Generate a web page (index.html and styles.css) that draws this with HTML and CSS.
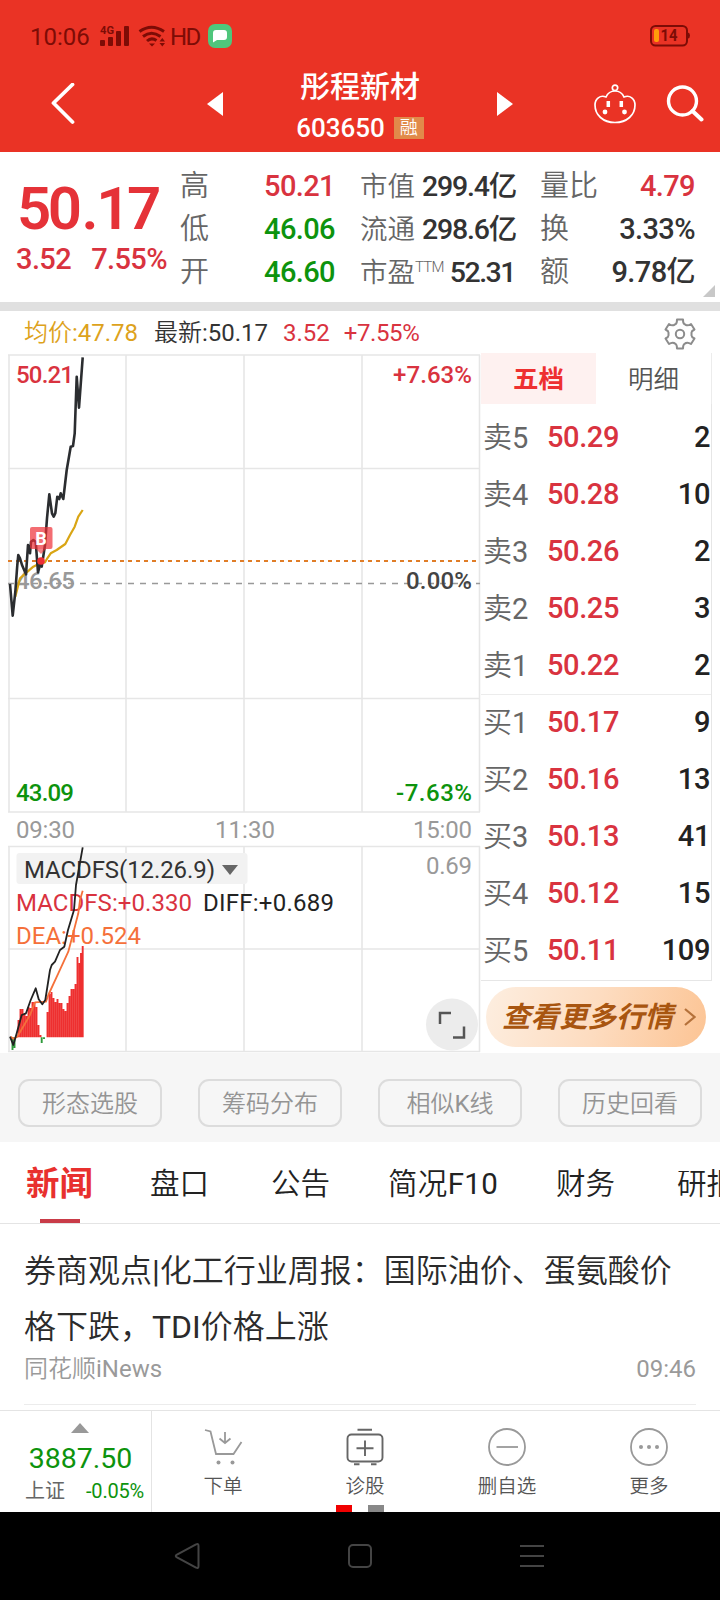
FILE: index.html
```html
<!DOCTYPE html>
<html lang="zh-CN">
<head>
    <meta charset="UTF-8">
    <meta name="viewport" content="width=device-width, initial-scale=1.0">
    <title>彤程新材 603650</title>
    <link rel="stylesheet" href="styles.css">
</head>
<body>
    <!-- Status bar -->
    <div class="status-bar">
        <span class="clock">10:06</span>
        <svg class="signal" width="30" height="22" viewBox="0 0 30 22">
            <g fill="#7d0c06">
                <rect x="1" y="15" width="5" height="6" rx="1"/>
                <rect x="9" y="12" width="5" height="9" rx="1"/>
                <rect x="17" y="6" width="5" height="15" rx="1"/>
                <rect x="25" y="1" width="5" height="20" rx="1"/>
            </g>
            <text x="1" y="9" textLength="14" lengthAdjust="spacingAndGlyphs">4G</text>
        </svg>
        <svg class="wifi" width="28" height="22" viewBox="0 0 28 22" fill="none" stroke="#7d0c06" stroke-width="3">
            <path d="M1.5 6.5Q13.5-2 26 6.5"/>
            <path d="M5 11.5Q13.5 5 22.500 11.500"/>
            <path d="M9 16Q13.500 12 18.500 15.500"/>
            <path d="M11 18.500H17L14 21.500Z" fill="#7d0c06" stroke="none"/>
            <path d="M21.500 16.500L24.300 13L27 16.500ZM21.500 18L24.300 21.500L27 18Z" fill="#7d0c06" stroke="none"/>
        </svg>
        <span class="hd">HD</span>
        <svg class="chat" width="24" height="24" viewBox="0 0 24 24">
            <rect width="24" height="24" rx="7" fill="#4fc67c"/>
            <path d="M8 6H16Q19 6 19 9V13Q19 16 16 16H9L5 18.500V9Q5 6 8 6Z" fill="#fff"/>
        </svg>
        <svg class="battery" width="40" height="22" viewBox="0 0 40 22">
            <rect x="1" y="1" width="36" height="19.500" rx="4.500" fill="none" stroke="#7d0c06" stroke-width="2"/>
            <path d="M38 7.500Q40 8 40 10.500Q40 13 38 13.500Z" fill="#7d0c06"/>
            <rect x="4" y="4" width="5" height="13" rx="2" fill="#ff9d0a"/>
            <text x="10.500" y="16.300" textLength="17" lengthAdjust="spacingAndGlyphs">14</text>
        </svg>
    </div>

    <!-- Stock title bar -->
    <div class="header">
        <svg width="24" height="42" viewBox="0 0 24 42" fill="none" stroke="#fff" stroke-width="3.800" stroke-linecap="round" stroke-linejoin="round"><path d="M21.500 1.500L2.500 20L21.500 39"/></svg>
        <svg class="prev" width="16" height="24" viewBox="0 0 16 24"><path d="M16 0V24L0 12Z" fill="#fff"/></svg>
        <div class="stock">
            <h1>彤程新材</h1>
            <div class="code">603650 <span class="badge">融</span></div>
        </div>
        <svg class="next" width="16" height="24" viewBox="0 0 16 24"><path d="M0 0V24L16 12Z" fill="#fff"/></svg>
        <svg class="robot" width="42" height="40" viewBox="0 0 42 40" fill="none" stroke="#fff" stroke-width="1.700">
            <circle cx="21" cy="3.800" r="2.700"/>
            <path d="M12 13C14 8.500 17 7 21 7S28 8.500 30 13C36 10.500 41 15 41 21C41 31 33 38.500 21 38.500S1 31 1 21C1 15 6 10.500 12 13Z"/>
            <path d="M14.300 17V23M27.300 17V23" stroke-width="3.500"/>
            <circle cx="11" cy="28" r="2.400" fill="#fff" stroke="none"/>
            <circle cx="30.500" cy="28" r="2.400" fill="#fff" stroke="none"/>
        </svg>
        <svg class="search" width="38" height="38" viewBox="0 0 38 38" fill="none" stroke="#fff" stroke-width="3.400" stroke-linecap="round"><circle cx="16.500" cy="16" r="14"/><path d="M26.500 26L35.500 34.500" stroke-width="4"/></svg>
    </div>

    <!-- Quote summary -->
    <div class="quote">
        <div class="price">
            <div class="last">50<span class="dot">.</span>17</div>
            <div class="change"><span>3.52</span><span>7.55%</span></div>
        </div>
        <div class="quote-col">
            <div><label>高</label><b class="red">50.21</b></div>
            <div><label>低</label><b class="green">46.06</b></div>
            <div><label>开</label><b class="green">46.60</b></div>
        </div>
        <div class="quote-col narrow">
            <div><label>市值</label><b>299.4亿</b></div>
            <div><label>流通</label><b>298.6亿</b></div>
            <div><label>市盈<sup>TTM</sup></label><b class="pe">52.31</b></div>
        </div>
        <div class="quote-col">
            <div><label>量比</label><b class="red">4.79</b></div>
            <div><label>换</label><b>3.33%</b></div>
            <div><label>额</label><b>9.78亿</b></div>
        </div>
        <span class="corner"></span>
    </div>

    <!-- Chart legend -->
    <div class="legend">
        <div class="avg">均价<span class="num">:47.78</span></div>
        <div class="latest">最新<span class="num">:50.17</span></div>
        <div class="red">3.52</div>
        <div class="red pct">+7.55%</div>
        <svg class="gear" width="32" height="32" viewBox="0 0 32 32" fill="none" stroke="#8c8c8c" stroke-width="2" stroke-linejoin="round">
            <path d="M13 1.500H19Q19 5.500 20.500 6.200L22 7Q24 8 27 6L30.500 11.500Q27.500 13 27.500 14.500V17.500Q27.500 19 30.500 20.500L27 26Q24 24 22 25L20.500 25.800Q19 26.500 19 30.500H13Q13 26.500 11.500 25.800L10 25Q8 24 5 26L1.500 20.500Q4.500 19 4.500 17.500V14.500Q4.500 13 1.500 11.500L5 6Q8 8 10 7L11.500 6.200Q13 5.500 13 1.500Z"/>
            <circle cx="16" cy="16" r="4.200"/>
        </svg>
    </div>

    <div class="market">
        <!-- Minute chart and MACD -->
        <svg class="chart" width="481" height="700" viewBox="0 0 481 700">
            <g class="grid">
                <path d="M8 2H480M8 115.500H480M8 345.500H480M8 459H480M8 493.500H480M8 596H480M8 698.500H480"/>
                <path d="M9 2V459M126 2V459M244 2V459M362 2V459M479.500 2V459"/>
                <path d="M9 493V699M126 493V699M244 493V699M362 493V699M479.500 493V699"/>
            </g>
            <rect x="16.500" y="500" width="231" height="31" rx="3" fill="#f2f2f2"/>

            <path d="M8 208H480" stroke="#e07d28" stroke-width="2" stroke-dasharray="4 4"/>
            <path d="M8 230.500H480" stroke="#999" stroke-width="1.600" stroke-dasharray="6 6"/>

            <g class="chart-text medium">
                <text x="16" y="30" textLength="58" fill="#d9333f">50.21</text>
                <text x="393" y="30" textLength="79" fill="#d9333f">+7.63%</text>
                <text x="16" y="235.500" textLength="59" fill="#999">46.65</text>
                <text x="406" y="236" textLength="66" fill="#444">0.00%</text>
                <text x="16" y="448" textLength="58" fill="#0d930d">43.09</text>
                <text x="396" y="448" textLength="76" fill="#0d930d">-7.63%</text>
            </g>
            <g class="chart-text">
                <text x="16" y="485" textLength="59" fill="#999">09:30</text>
                <text x="215" y="485" textLength="60" fill="#999">11:30</text>
                <text x="413" y="485" textLength="59" fill="#999">15:00</text>
                <text x="426" y="521" textLength="46" fill="#999">0.69</text>
                <text x="24" y="525" textLength="191" fill="#333">MACDFS(12.26.9)</text>
                <text x="16" y="558" textLength="176" fill="#d9333f">MACDFS:+0.330</text>
                <text x="203" y="558" textLength="131" fill="#222">DIFF:+0.689</text>
                <text x="16" y="591" textLength="125" fill="#f5703a">DEA:+0.524</text>
            </g>
            <path d="M222 512H238L230 522Z" fill="#666"/>

            <!-- average and price lines -->
            <polyline class="line avg-line" points="15.3,243.7 20,225.3 26.7,219.3 33.3,213.7 40,210.3 45,209.3 47.3,205.3 50.7,200.3 56.7,197 65.3,191 70,182 74.7,173.7 78.3,163.7 82.7,157"/>
            <polyline class="line price-line" points="10,231 12.7,262.7 15.3,239 17.3,212 18.3,202 20,205.3 22,212 26,221.3 28,192 30,200.3 31,188.7 33.3,187 35.7,188.7 38,219.3 40,212 41.7,213.7 45,192 47,165.3 49.3,141.3 52,160.3 53.7,163.7 55.3,160.3 57.3,143.7 59.3,146 60.7,140.3 63.3,146 66.7,117 70.7,93.7 73,93 74.7,80.3 76.7,23.7 79,54.7 82.7,4.3"/>
            <rect x="30" y="174" width="22.500" height="22" rx="2" fill="#ee2f36" opacity=".7"/>
            <path d="M36 196H46L41 201Z" fill="#ee2f36" opacity=".6"/>
            <circle cx="41" cy="208" r="3.800" fill="#ee2f36"/>
            <text class="buy-mark" x="41" y="192" text-anchor="middle">B</text>

            <!-- MACD bars -->
            <path stroke="#ee2f2f" stroke-width="1.900" d="M18.500 684.300V667M20.500 684.300V656M22.500 684.300V656M24.500 684.300V661M26.500 684.300V663M28.500 684.300V654M30.500 684.300V655M32.500 684.300V649M34.500 684.300V649M36.500 684.300V654M38.500 684.300V672M40.500 684.300V682M47.500 684.300V659M49.500 684.300V641M51.500 684.300V639M53.500 684.300V645M55.500 684.300V649M57.500 684.300V646M59.500 684.300V650M61.500 684.300V650M63.500 684.300V656M65.500 684.300V658M67.500 684.300V650M69.500 684.300V643M71.500 684.300V636M73.500 684.300V636M75.500 684.300V631M77.500 684.300V604M79.500 684.300V610M81 684.300V600M82.700 684.300V593"/>
            <path stroke="#2d9a3a" stroke-width="1.900" d="M12.500 684.300V697M14.500 684.300V695M41.700 684.300V690M44 684.300V686"/>
            <polyline class="line macd-line" stroke="#f5703a" points="10.7,683.7 13.3,685.7 17.3,683.7 30,662 35,649.3 46,648.7 48.3,642 58.3,620.3 68.3,598.7 74,577 78.3,560.3 80,547 82.7,537.7"/>
            <polyline class="line macd-line" stroke="#222" points="10,683.7 13.3,692 16.7,680.3 21.7,662 26,660.3 30.7,647 35.7,635.3 38.7,646.3 42.3,651.3 45.3,647 50,617 51.7,612 55,608.7 60,597 64.3,593.7 68,577 74,557 76,532 82.7,494.3"/>

            <circle cx="452" cy="671.500" r="26" fill="#ececec"/>
            <path d="M440 671V660H451M453 684.500H464V673.500" fill="none" stroke="#555" stroke-width="2.500"/>
        </svg>

        <!-- Order book -->
        <div class="book">
            <div class="book-tabs"><span class="active">五档</span><span>明细</span></div>
            <div class="orders">
                <div class="order"><i>卖<span class="num">5</span></i><b>50.29</b><em>2</em></div>
                <div class="order"><i>卖<span class="num">4</span></i><b>50.28</b><em>10</em></div>
                <div class="order"><i>卖<span class="num">3</span></i><b>50.26</b><em>2</em></div>
                <div class="order"><i>卖<span class="num">2</span></i><b>50.25</b><em>3</em></div>
                <div class="order"><i>卖<span class="num">1</span></i><b>50.22</b><em>2</em></div>
                <div class="order first-bid"><i>买<span class="num">1</span></i><b>50.17</b><em>9</em></div>
                <div class="order"><i>买<span class="num">2</span></i><b>50.16</b><em>13</em></div>
                <div class="order"><i>买<span class="num">3</span></i><b>50.13</b><em>41</em></div>
                <div class="order"><i>买<span class="num">4</span></i><b>50.12</b><em>15</em></div>
                <div class="order"><i>买<span class="num">5</span></i><b>50.11</b><em>109</em></div>
            </div>
            <div class="more-quotes">
                <span>查看更多行情</span>
                <svg width="12" height="18" viewBox="0 0 12 18" fill="none" stroke="#b5713a" stroke-width="2.200"><path d="M1 1L10.500 9L1 17"/></svg>
            </div>
        </div>
    </div>

    <!-- Tools -->
    <div class="tools">
        <div>形态选股</div>
        <div>筹码分布</div>
        <div>相似<span class="num">K</span>线</div>
        <div>历史回看</div>
    </div>

    <!-- Info tabs -->
    <div class="tabs">
        <div class="active">新闻</div>
        <div>盘口</div>
        <div>公告</div>
        <div class="f10">简况<span class="num">F10</span></div>
        <div>财务</div>
        <div>研报</div>
    </div>

    <div class="news">
        <h2>券商观点<span class="num">|</span>化工行业周报：国际油价、蛋氨酸价格下跌，<span class="num">TDI</span>价格上涨</h2>
        <div class="meta"><span>同花顺<span class="num">iNews</span></span><span class="num">09:46</span></div>
    </div>

    <!-- Bottom bar -->
    <div class="bottom-bar">
        <div class="index">
            <span class="up"></span>
            <strong>3887.50</strong>
            <div class="index-row"><span>上证</span><span class="green">-0.05%</span></div>
        </div>
        <div class="action">
            <svg width="40" height="40" viewBox="0 0 40 40" fill="none" stroke="#999" stroke-width="1.800">
                <path d="M2 3L7.500 4.500L13 27H30.500L38.500 15"/>
                <path d="M22 5V15.500M16.500 11.500L22 16L27.500 11.500"/>
                <circle cx="15.500" cy="35.500" r="2" fill="#999" stroke="none"/>
                <circle cx="29.500" cy="35.500" r="2" fill="#999" stroke="none"/>
            </svg>
            <span>下单</span>
        </div>
        <div class="action">
            <svg width="40" height="40" viewBox="0 0 40 40" fill="none" stroke="#666" stroke-width="1.900">
                <rect x="2.500" y="7.500" width="35" height="27" rx="4"/>
                <path d="M12.500 2.800H27M20 13.500V29M11.500 21.200H28.500M9 37.300H14.500M26 37.300H31.500"/>
            </svg>
            <span>诊股</span>
        </div>
        <div class="action">
            <svg width="40" height="40" viewBox="0 0 40 40" fill="none" stroke="#999" stroke-width="1.800"><circle cx="20" cy="20" r="18"/><path d="M9.500 20H31"/></svg>
            <span>删自选</span>
        </div>
        <div class="action">
            <svg width="40" height="40" viewBox="0 0 40 40" fill="none" stroke="#999" stroke-width="1.800"><circle cx="20" cy="20" r="18"/><g fill="#999" stroke="none"><circle cx="12" cy="20" r="2"/><circle cx="20" cy="20" r="2"/><circle cx="28" cy="20" r="2"/></g></svg>
            <span>更多</span>
        </div>
        <div class="pager"><i></i><i></i></div>
    </div>

    <!-- System navigation -->
    <div class="nav-bar">
        <svg width="26" height="28" viewBox="0 0 26 28"><path d="M22 2.500Q24.500 1 24.500 4V24Q24.500 27 22 25.500L3 15.500Q0.500 14 3 12.500Z"/></svg>
        <svg width="26" height="28" viewBox="0 0 26 28"><rect x="2" y="3" width="22" height="22" rx="4"/></svg>
        <svg width="26" height="28" viewBox="0 0 26 28"><path d="M0 4H24M0 14H24M0 24H24"/></svg>
    </div>
</body>
</html>
```

FILE: styles.css
```css
* {
    margin: 0;
    padding: 0;
    box-sizing: border-box;
}

body {
    width: 720px;
    height: 1600px;
    overflow: hidden;
    background-color: #fff;
    color: #333;
    font-family: Roboto, 'Noto Sans CJK SC', sans-serif;
    font-size: 24px;
}

svg {
    display: block;
    flex-shrink: 0;
}

i, em {
    font-style: normal;
}

.num {
    font-weight: 400;
}

.red {
    color: #d9333f;
}

.green {
    color: #0d930d;
}

/* Status bar */
.status-bar {
    height: 60px;
    padding: 12px 30px 0 30px;
    display: flex;
    align-items: center;
    background-color: #ea3325;
    color: #7d0c06;
}

.status-bar text {
    font-size: 11px;
    font-weight: 700;
    fill: #7d0c06;
}

.clock {
    width: 69px;
    padding-top: 1px;
}

.wifi {
    margin-left: 9px;
}

.hd {
    margin-left: 4px;
    width: 38px;
    padding-top: 1px;
    letter-spacing: -1.5px;
}

.battery {
    margin-left: auto;
}

.status-bar .battery text {
    font-size: 16px;
}

/* Stock title bar */
.header {
    height: 92px;
    padding: 0 16px 0 51px;
    display: flex;
    align-items: center;
    background-color: #ea3325;
    color: #fff;
}

.header > svg {
    position: relative;
    top: -2px;
}

.prev {
    margin-left: 132px;
}

.stock {
    width: 274px;
    height: 92px;
    padding-top: 9px;
    text-align: center;
}

.stock h1 {
    font-size: 30px;
    font-weight: 500;
    line-height: 36px;
}

.code {
    display: flex;
    align-items: center;
    justify-content: center;
    margin-top: 6px;
    font-size: 26px;
    font-weight: 500;
    line-height: 34px;
}

.badge {
    width: 30px;
    height: 22px;
    margin-left: 9px;
    background-color: #e18a4a;
    font-size: 18px;
    font-weight: 350;
    line-height: 21px;
}

.robot {
    margin-left: 81px;
}

.search {
    margin-left: auto;
}

/* Quote summary */
.quote {
    position: relative;
    height: 159px;
    padding: 12px 25px 0 16px;
    display: flex;
    border-bottom: 9px solid #e0e0e0;
}

.price {
    width: 164px;
    color: #e53238;
}

.last {
    height: 74px;
    margin-top: 6px;
    padding-left: 1px;
    font-size: 60px;
    font-weight: 600;
    line-height: 77px;
    letter-spacing: -3.5px;
}

.dot {
    margin: 0 1px 0 3px;
}

.change {
    display: flex;
    justify-content: space-between;
    width: 151px;
    font-size: 29px;
    font-weight: 500;
    line-height: 30px;
    letter-spacing: -0.6px;
    color: #d9333f;
}

.quote-col {
    width: 155px;
    margin-right: 25px;
}

.quote-col:nth-child(4) {
    margin-right: 0;
}

.quote-col.narrow {
    width: 156px;
    margin-right: 24px;
}

.quote-col div {
    display: flex;
    align-items: center;
    justify-content: space-between;
    height: 43.4px;
    line-height: 43px;
    white-space: nowrap;
}

.quote-col label {
    padding-top: 1px;
    font-size: 29px;
    font-weight: 350;
    color: #666;
}

.quote-col.narrow label {
    font-size: 27.5px;
}

.quote-col b {
    padding-top: 1px;
    font-size: 29px;
    font-weight: 500;
    letter-spacing: -0.6px;
}

.quote-col.narrow b {
    font-size: 28.5px;
    letter-spacing: -1.2px;
}

.quote-col.narrow .pe {
    padding-right: 1px;
    letter-spacing: -1.5px;
}

.quote-col sup {
    font-size: 15px;
    font-weight: 300;
    line-height: 0;
    letter-spacing: -0.8px;
    vertical-align: 10px;
}

.corner {
    position: absolute;
    right: 5px;
    bottom: 5px;
    border-left: 12px solid transparent;
    border-bottom: 12px solid #c8c8c8;
}

/* Chart legend */
.legend {
    height: 42px;
    padding: 4px 24px 0 24px;
    display: flex;
    align-items: flex-start;
    line-height: 36px;
}

.legend .avg,
.legend .latest {
    font-weight: 350;
}

.avg {
    width: 130px;
    color: #dda21c;
}

.latest {
    width: 129px;
}

.pct {
    margin-left: 14px;
    letter-spacing: -0.4px;
}

.gear {
    margin: 3px 0 0 auto;
}

/* Minute chart */
.market {
    display: flex;
    height: 700px;
}

.grid {
    stroke: #e6e6e6;
    stroke-width: 1.6;
}

.chart-text {
    font-size: 24px;
}

.medium {
    font-weight: 500;
}

.line {
    fill: none;
    stroke-linejoin: round;
}

.price-line {
    stroke: #2b2d30;
    stroke-width: 2.6;
}

.avg-line {
    stroke: #d9a514;
    stroke-width: 2.2;
}

.macd-line {
    stroke-width: 1.8;
}

.buy-mark {
    font-size: 18px;
    font-weight: 700;
    fill: #fff;
}

/* Order book */
.book {
    width: 231px;
}

.book-tabs {
    display: flex;
    height: 51px;
    line-height: 53px;
    font-size: 25.5px;
    font-weight: 350;
    text-align: center;
    color: #555;
    border-right: 1px solid #ececec;
}

.book-tabs span {
    width: 115px;
}

.book-tabs .active {
    background-color: #fef1f0;
    color: #ee3030;
    font-weight: 700;
}

.orders {
    height: 577px;
    padding-top: 4px;
    border-right: 1px solid #e6e6e6;
    border-bottom: 1px solid #e6e6e6;
}

.order {
    display: flex;
    align-items: center;
    height: 57px;
    padding: 0 1px 0 2px;
    font-size: 29px;
    letter-spacing: -0.4px;
}

.order i {
    width: 64px;
    padding-bottom: 4px;
    color: #666;
    font-size: 29px;
    font-weight: 350;
    letter-spacing: 0;
}

.order b {
    font-weight: 500;
    color: #d9333f;
}

.order em {
    margin-left: auto;
    font-weight: 500;
    color: #222;
}

.first-bid {
    background: linear-gradient(#ececec, #ececec) 0 1px / 100% 1px no-repeat;
}

.more-quotes {
    display: flex;
    align-items: center;
    justify-content: space-between;
    width: 220px;
    height: 60px;
    margin: 6px 0 0 5px;
    padding: 0 10px 0 16px;
    border-radius: 30px;
    background: linear-gradient(105deg, #fdeee0, #fddcc0 50%, #fcc494);
    color: #a85510;
}

.more-quotes span {
    padding-bottom: 5px;
    font-size: 28.5px;
    font-weight: 700;
    font-style: italic;
}

/* Tools */
.tools {
    display: flex;
    justify-content: space-between;
    height: 89px;
    padding: 26px 18px 0;
    background-color: #f6f6f6;
}

.tools div {
    width: 144px;
    height: 48px;
    border: 2px solid #dcdcdc;
    border-radius: 11px;
    line-height: 46px;
    text-align: center;
    font-weight: 350;
    color: #949494;
}

/* Info tabs */
.tabs {
    display: flex;
    gap: 62px;
    height: 82px;
    padding-left: 26px;
    overflow: hidden;
    border-bottom: 1px solid #e4e4e4;
    font-size: 29.5px;
    font-weight: 350;
    line-height: 84px;
    white-space: nowrap;
    color: #222;
}

.tabs .f10 {
    margin: 0 -4px 0 -4px;
    letter-spacing: 0.3px;
}

.tabs .active {
    position: relative;
    width: 67px;
    margin-right: -5px;
    font-size: 33.5px;
    font-weight: 700;
    line-height: 83px;
    color: #e8302e;
}

.tabs .active::after {
    content: '';
    position: absolute;
    left: 14px;
    bottom: 0;
    width: 40px;
    height: 4px;
    background-color: #c93b48;
}

/* News */
.news {
    height: 181px;
    margin: 0 24px;
    padding-top: 19px;
    border-bottom: 1px solid #ececec;
}

.news h2 {
    font-size: 32px;
    font-weight: 350;
    line-height: 56px;
    color: #2b2b2b;
}

.meta {
    display: flex;
    justify-content: space-between;
    line-height: 29px;
    color: #9a9a9a;
    font-weight: 350;
}

/* Bottom bar */
.bottom-bar {
    position: relative;
    display: flex;
    height: 102px;
    margin-top: 5px;
    border-top: 1px solid #e4e4e4;
}

.index {
    width: 152px;
    padding: 12px 7px 0 25px;
    border-right: 1px solid #e4e4e4;
    text-align: center;
}

.up {
    display: block;
    width: 18px;
    margin-left: 46px;
    border: 9px solid transparent;
    border-top: 0;
    border-bottom: 10px solid #999;
}

.index strong {
    display: block;
    margin: 9px 8px 0 0;
    font-size: 28.5px;
    font-weight: 400;
    line-height: 34px;
    color: #0d930d;
}

.index-row {
    display: flex;
    justify-content: space-between;
    align-items: center;
    font-size: 20px;
    line-height: 30px;
    color: #666;
}

.index-row .green {
    letter-spacing: -0.2px;
}

.action {
    flex: 1;
    display: flex;
    flex-direction: column;
    align-items: center;
    padding-top: 16px;
    font-size: 19.5px;
    font-weight: 350;
    line-height: 40px;
    color: #555;
}

.pager {
    position: absolute;
    left: 336px;
    bottom: 0;
    display: flex;
    gap: 16px;
}

.pager i {
    width: 16px;
    height: 7px;
    background-color: #888;
}

.pager i:first-child {
    background-color: #f00000;
}

/* System navigation */
.nav-bar {
    display: flex;
    gap: 147px;
    height: 88px;
    padding: 30px 0 0 174px;
    background-color: #000;
}

.nav-bar svg {
    fill: none;
    stroke: #444;
    stroke-width: 2;
}
```
